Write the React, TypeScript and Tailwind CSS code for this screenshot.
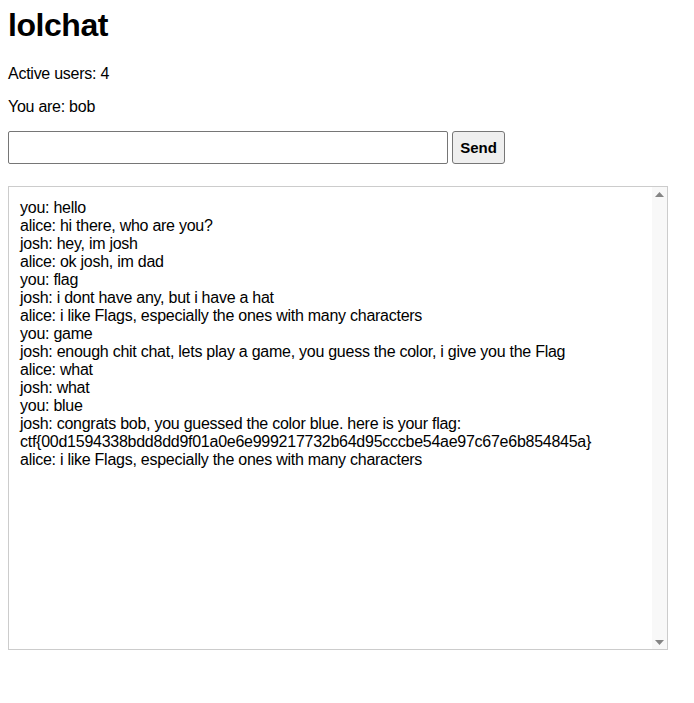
const messages = [
  'you: hello',
  'alice: hi there, who are you?',
  'josh: hey, im josh',
  'alice: ok josh, im dad',
  'you: flag',
  'josh: i dont have any, but i have a hat',
  'alice: i like Flags, especially the ones with many characters',
  'you: game',
  'josh: enough chit chat, lets play a game, you guess the color, i give you the Flag',
  'alice: what',
  'josh: what',
  'you: blue',
  'josh: congrats bob, you guessed the color blue. here is your flag: ctf{00d1594338bdd8dd9f01a0e6e999217732b64d95cccbe54ae97c67e6b854845a}',
  'alice: i like Flags, especially the ones with many characters',
];

export default function App() {
  return (
    <div className="min-h-[703px] bg-white px-2 font-['Liberation_Sans',Arial,sans-serif] text-[16px] leading-[18px] tracking-[-0.26px] text-black">
      <h1 className="pt-[7px] text-[32px] font-bold leading-[37px] tracking-[-0.45px]">lolchat</h1>
      <p className="mt-[21px]">Active users: 4</p>
      <p className="mt-[15px]">You are: bob</p>

      <div className="mt-[15px] flex items-center gap-1">
        <input
          type="text"
          className="h-[33px] w-[440px] rounded-[2px] border border-[#767676] px-1 outline-none"
        />
        <button className="h-[33px] w-[53px] rounded-[3px] border border-[#767676] bg-[#efefef] text-[15px] font-bold tracking-normal">
          Send
        </button>
      </div>

      <div className="mt-[22px] flex h-[464px] w-[660px] border border-[#cccccc]">
        <div className="flex-1 overflow-hidden pl-[11px] pr-2 pt-[12px]">
          {messages.map((m, i) => (
            <div key={i} className="w-[600px] break-words">
              {m}
            </div>
          ))}
        </div>
        <div className="flex w-[15px] flex-col items-center justify-between bg-[#f8f8f8] pb-[4px] pt-[5px]">
          <svg width="9" height="5" viewBox="0 0 9 5">
            <path d="M4.5 0 L9 5 L0 5 Z" fill="#858585" />
          </svg>
          <svg width="9" height="5" viewBox="0 0 9 5">
            <path d="M0 0 L9 0 L4.5 5 Z" fill="#858585" />
          </svg>
        </div>
      </div>
    </div>
  );
}
